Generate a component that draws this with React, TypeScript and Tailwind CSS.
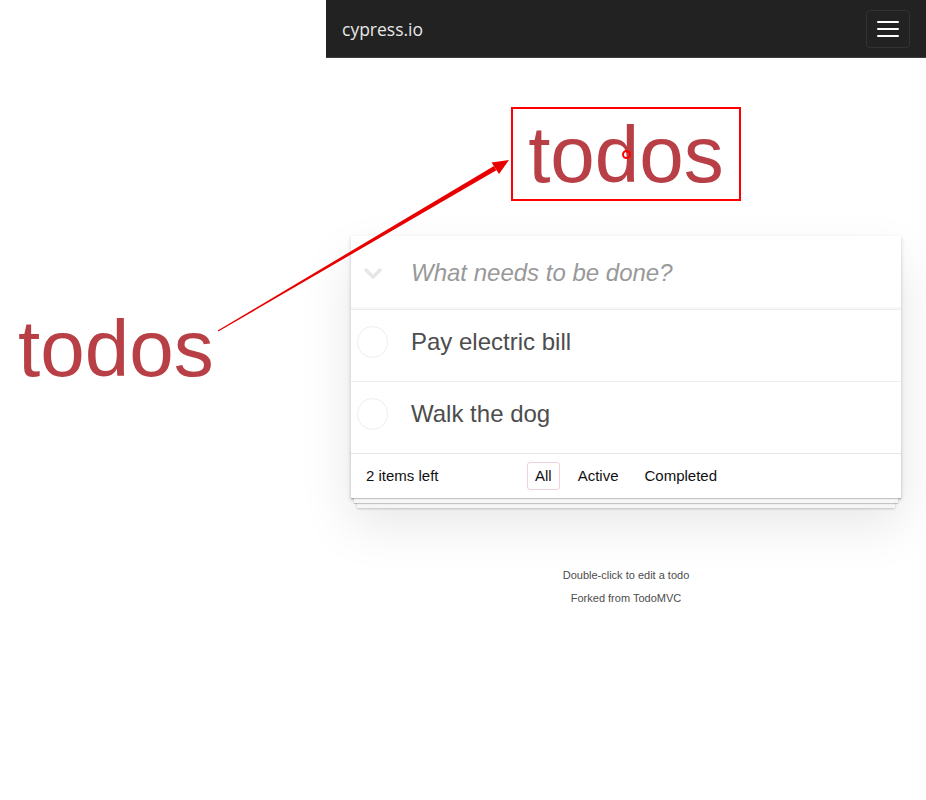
import React from "react";

function Chevron() {
  return (
    <svg width="18" height="12" viewBox="0 0 18 12" className="block">
      <path d="M2 2 L9 9 L16 2" fill="none" stroke="#e6e6e6" strokeWidth="3.5" strokeLinecap="round" strokeLinejoin="round" />
    </svg>
  );
}

function TodoItem({ text }: { text: string }) {
  return (
    <li className="relative flex h-[72px] items-center border-t border-[#ededed] pb-[8px]">
      <span className="absolute left-[6px] top-[16px] h-[32px] w-[31px] rounded-full border border-[#ededed]" />
      <span className="pl-[60px] text-[24px] leading-[29px] text-[#4d4d4d]">{text}</span>
    </li>
  );
}

export default function App() {
  return (
    <div
      className="relative flex h-[800px] w-[926px] overflow-hidden bg-white"
      style={{ fontFamily: '"Liberation Sans", Arial, sans-serif' }}
    >
      <div className="w-[326px] shrink-0" />
      <div className="flex flex-1 flex-col">
        <nav className="flex h-[58px] items-center justify-between border-b border-[#3c3c3c] bg-[#222222] pl-[16px] pr-[16px]">
          <span
            className="text-[17.5px] leading-[20px] text-[#e6e6e6]"
            style={{ fontFamily: '"Open Sans", "Noto Sans", sans-serif' }}
          >
            cypress.io
          </span>
          <button className="flex h-[38px] w-[44px] flex-col items-center justify-center gap-[5px] rounded-[4px] border border-[#333333]">
            <span className="block h-[2px] w-[22px] rounded-[1px] bg-white" />
            <span className="block h-[2px] w-[22px] rounded-[1px] bg-white" />
            <span className="block h-[2px] w-[22px] rounded-[1px] bg-white" />
          </button>
        </nav>

        <section className="flex flex-col items-center">
          <h1 className="mt-[57px] text-[80px] leading-[80px] font-extralight text-[#b83f45]">todos</h1>

          <div className="mt-[41px] w-[550px] bg-white shadow-[0_2px_4px_0_rgba(0,0,0,0.2),0_25px_50px_0_rgba(0,0,0,0.1)]">
            <div className="relative flex h-[73px] items-center shadow-[inset_0_-2px_1px_rgba(0,0,0,0.03)]">
              <span className="absolute left-[13px] top-[32px]">
                <Chevron />
              </span>
              <span className="pl-[60px] text-[24px] italic leading-[29px] text-[#999999]">
                What needs to be done?
              </span>
            </div>
            <ul>
              <TodoItem text="Pay electric bill" />
              <TodoItem text="Walk the dog" />
            </ul>
            <footer className="relative flex h-[45px] items-center border-t border-[#e6e6e6] pl-[15px] text-[15px] text-[#111111]">
              <div className="pointer-events-none absolute bottom-0 left-0 right-0 h-[50px] overflow-hidden shadow-[0_1px_1px_rgba(0,0,0,0.2),0_8px_0_-3px_#f6f6f6,0_9px_1px_-3px_rgba(0,0,0,0.2),0_16px_0_-6px_#f6f6f6,0_17px_2px_-6px_rgba(0,0,0,0.2)]" />
              <span className="relative">2 items left</span>
              <ul className="absolute left-0 right-0 top-0 flex h-full items-center justify-center gap-[4px] pb-[1px]">
                <li className="m-[3px] rounded-[3px] border border-[rgba(206,70,91,0.25)] px-[7px] py-[3px] leading-[20px]">All</li>
                <li className="m-[3px] rounded-[3px] border border-transparent px-[7px] py-[3px] leading-[20px]">Active</li>
                <li className="m-[3px] rounded-[3px] border border-transparent px-[7px] py-[3px] leading-[20px]">Completed</li>
              </ul>
            </footer>
          </div>

          <div className="mt-[66px] text-center text-[11px] text-[#4d4d4d]">
            <p className="h-[23px] leading-[23px]">Double-click to edit a todo</p>
            <p className="h-[23px] leading-[23px]">Forked from TodoMVC</p>
          </div>
        </section>
      </div>

      {/* annotations */}
      <span className="absolute left-[18px] top-[309px] text-[80px] leading-[80px] font-extralight text-[#b83f45]">todos</span>
      <div className="pointer-events-none absolute left-[511px] top-[107px] h-[94px] w-[230px] border-2 border-[#ff0000]" />
      <div className="pointer-events-none absolute left-[622px] top-[150px] h-[9px] w-[9px] rounded-full border-2 border-[#ff0000]" />
      <svg className="pointer-events-none absolute left-0 top-0" width="926" height="800" viewBox="0 0 926 800">
        <polygon points="218.3,331.5 217.7,330.5 494,166 496.4,170.2" fill="#e80000" />
        <polygon points="509,160 491.5,162.5 495.2,168.1 499,174" fill="#e80000" />
      </svg>
    </div>
  );
}
